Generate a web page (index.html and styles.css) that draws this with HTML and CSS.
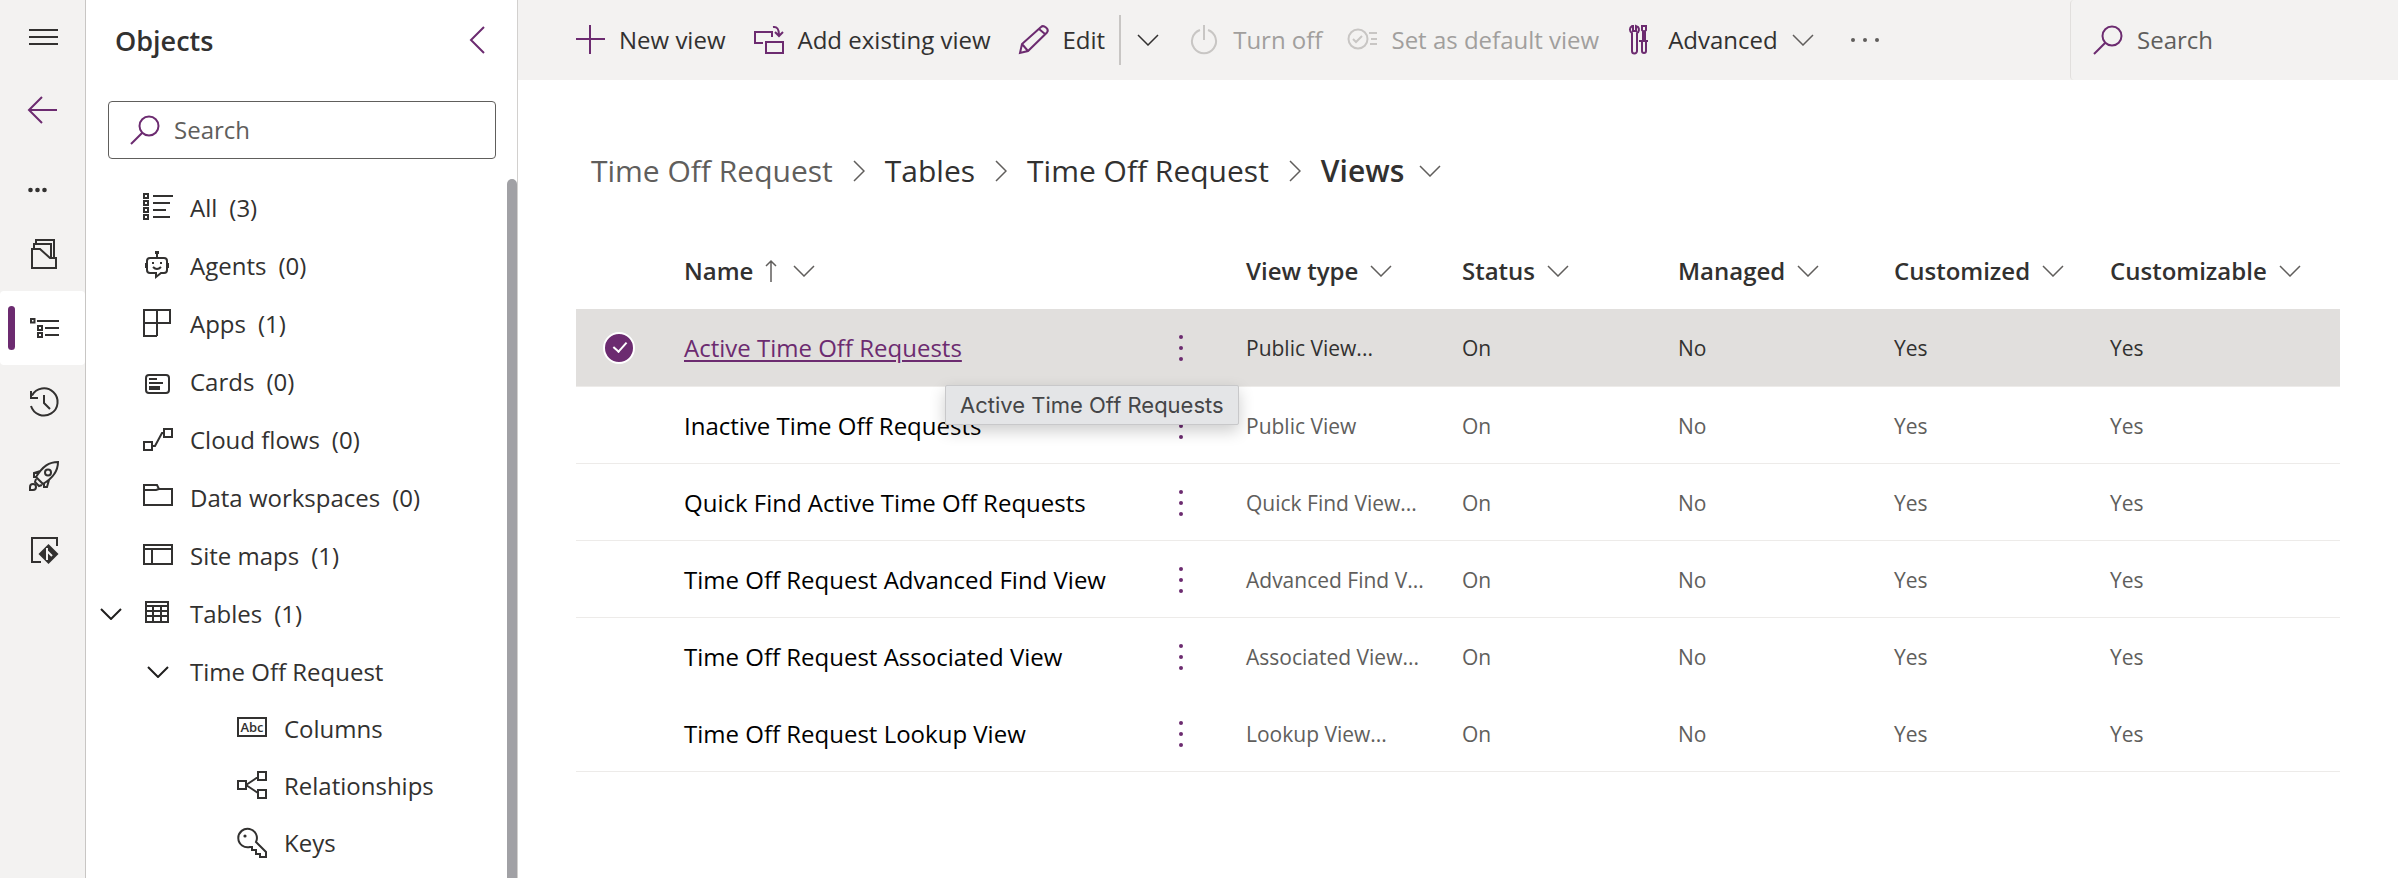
FILE: index.html
```
<!DOCTYPE html>
<html lang="en">
<head>
    <meta charset="UTF-8">
    <meta name="viewport" content="width=device-width, initial-scale=1.0">
    <title>Views - Time Off Request</title>
    <link rel="stylesheet" href="styles.css">
</head>
<body>
    <!-- shared shapes -->
    <svg class="sprite" aria-hidden="true">
        <symbol id="chevron" viewBox="0 0 22 12"><path d="M1 1l10 10 10-10"/></symbol>
        <symbol id="chevron-right" viewBox="0 0 12 22"><path d="M1 1l10 10-10 10"/></symbol>
        <symbol id="search" viewBox="0 0 30 30"><circle cx="19" cy="11" r="9.5"/><path d="M12.3 17.7L1 29"/></symbol>
        <symbol id="dots" viewBox="0 0 4 28"><circle cx="2" cy="3" r="2"/><circle cx="2" cy="14" r="2"/><circle cx="2" cy="25" r="2"/></symbol>
    </svg>

    <div class="app">
        <nav class="rail" aria-label="Main">
            <button class="rail-item" aria-label="Menu">
                <svg class="icon" viewBox="0 0 30 30"><path d="M1 8h29M1 15h29M1 22h29"/></svg>
            </button>
            <button class="rail-item purple" aria-label="Back">
                <svg class="icon" viewBox="0 0 30 30"><path d="M1 14h28M14 1L1 14l13 13"/></svg>
            </button>
            <button class="rail-item rail-more" aria-label="More">
                <svg class="icon solid" viewBox="0 0 30 30"><circle cx="2.5" cy="15" r="2.3"/><circle cx="9.5" cy="15" r="2.3"/><circle cx="16.5" cy="15" r="2.3"/></svg>
            </button>
            <button class="rail-item" aria-label="Overview">
                <svg class="icon" viewBox="0 0 30 30"><path d="M4 29V10h8l10 9h6v10zM6 10V5h17v14M8 5V1h18v18"/></svg>
            </button>
            <button class="rail-item selected" aria-label="Objects">
                <svg class="icon" viewBox="0 0 30 30"><path d="M3 6h3.500v3.500H3zM10 13h4v4h-4zM10 20h4v4h-4zM9 8h22M17 15h14M17 22h14"/></svg>
            </button>
            <button class="rail-item" aria-label="History">
                <svg class="icon" viewBox="0 0 30 30"><path d="M4 8.500A13.600 13.600 0 1 1 3 19M3 4v7h7M16 8v8l6 6"/></svg>
            </button>
            <button class="rail-item" aria-label="Publish">
                <svg class="icon" viewBox="0 0 30 30"><path d="M30 1c-9 0-15 4-22 15l7 7C25 17 30 10 30 1zM12.500 10L6 12v4h2M21 19l-2 7h-3v-3M8 18l-1 3 4 4 3-1"/><circle cx="20" cy="11.500" r="3"/><path d="M2 29v-3a3 3 0 1 1 3 3z"/></svg>
            </button>
            <button class="rail-item" aria-label="Source control">
                <svg class="icon" viewBox="0 0 30 30"><path d="M13 27H4V3h25v8"/><path class="solid" d="M20.500 9l10 10-10 10-10-10z"/><path class="light" d="M19 13v12M19 16l5 5"/></svg>
            </button>
        </nav>

        <aside class="objects">
            <header class="objects-header">
                <h2>Objects</h2>
                <button class="collapse" aria-label="Collapse">
                    <svg viewBox="0 0 16 28"><path d="M15 1L2 14l13 13"/></svg>
                </button>
            </header>
            <label class="search-box">
                <svg class="icon purple"><use href="#search"/></svg>
                <input type="search" placeholder="Search" aria-label="Search objects">
            </label>
            <div class="tree-area">
                <ul class="tree">
                    <li><a href="#"><svg class="icon" viewBox="0 0 30 30"><path d="M1 1h4v4H1zM1 8h4v4H1zM1 15h4v4H1zM1 22h4v4H1zM10 3h20M10 10h17M10 17h13M10 24h17"/></svg>All <span>(3)</span></a></li>
                    <li><a href="#"><svg class="icon" viewBox="0 0 30 30"><path d="M7 7h14a3 3 0 0 1 3 3v9a3 3 0 0 1-3 3h-3l-5 4v-4H7a3 3 0 0 1-3-3v-9a3 3 0 0 1 3-3zM14 7V1M3 12v5M25 12v5M10 16q4 4 8 0"/><path class="solid" d="M9 11h2v2H9zM17 11h2v2h-2zM12 0h4v3h-4z"/></svg>Agents <span>(0)</span></a></li>
                    <li><a href="#"><svg class="icon" viewBox="0 0 30 30"><path d="M1 1h26v13H1zM14 1v26M1 14v13h13"/></svg>Apps <span>(1)</span></a></li>
                    <li><a href="#"><svg class="icon" viewBox="0 0 30 30"><rect x="3" y="8" width="23" height="18" rx="3"/><path d="M6 12h8M6 16h14"/><path class="solid" d="M6 19h11v4H6z"/></svg>Cards <span>(0)</span></a></li>
                    <li><a href="#"><svg class="icon" viewBox="0 0 30 30"><path d="M1 17h8v8H1zM21 4h8v8h-8zM9 21h3l7-13h2"/></svg>Cloud flows <span>(0)</span></a></li>
                    <li><a href="#"><svg class="icon" viewBox="0 0 30 30"><path d="M1 2h13l2 4h13v16H1zM1 7h12l3-1"/></svg>Data workspaces <span>(0)</span></a></li>
                    <li><a href="#"><svg class="icon" viewBox="0 0 30 30"><path d="M1 4h28v19H1zM1 8h28M9 8v15"/></svg>Site maps <span>(1)</span></a></li>
                    <li>
                        <button class="toggle" aria-label="Collapse Tables"><svg class="chevron"><use href="#chevron"/></svg></button>
                        <a href="#"><svg class="icon" viewBox="0 0 30 30"><path d="M3 3h22v20H3zM3 7h22M3 12h22M3 17h22M10 7v16M18 7v16"/></svg>Tables <span>(1)</span></a>
                    </li>
                    <li class="level-2">
                        <button class="toggle" aria-label="Collapse Time Off Request"><svg class="chevron"><use href="#chevron"/></svg></button>
                        <a href="#">Time Off Request</a>
                    </li>
                    <li class="level-3"><a href="#"><svg class="icon" viewBox="0 0 30 30"><path d="M1 4h28v18H1z"/><text x="15" y="18" text-anchor="middle">Abc</text></svg>Columns</a></li>
                    <li class="level-3"><a href="#"><svg class="icon" viewBox="0 0 30 30"><path d="M1 10h8v8H1zM21 1h8v8h-8zM21 19h8v8h-8zM9 14l12-8M9 14l12 8"/></svg>Relationships</a></li>
                    <li class="level-3"><a href="#"><svg class="icon" viewBox="0 0 30 30"><path d="M19 14l10 10v5h-6v-3h-4v-4h-4v-3h-2A9.300 9.300 0 1 1 19 14z"/><circle class="solid" cx="8" cy="8" r="1.600"/></svg>Keys</a></li>
                </ul>
                <div class="scroll-thumb"></div>
            </div>
        </aside>

        <main class="content">
            <div class="command-bar">
                <button class="command"><svg class="icon" viewBox="0 0 30 30"><path d="M15 0v29M1 14h29"/></svg>New view</button>
                <button class="command"><svg class="icon" viewBox="0 0 30 30"><path d="M9 18H1V7h17v5M12 17h17v11H12zM19 2q6-1 6 8M21 7l4 4 4-4"/></svg>Add existing view</button>
                <button class="command"><svg class="icon" viewBox="0 0 30 30"><path d="M1 28l2-9L22 2q2-2 5 .5t1 5L9 26zM20 4l6 5M3 19l6 7"/></svg>Edit</button>
                <button class="command split" aria-label="More edit options"><svg class="chevron"><use href="#chevron"/></svg></button>
                <button class="command" disabled><svg class="icon" viewBox="0 0 30 30"><path d="M15 0v15M11 5a12 12 0 1 0 8 0"/></svg>Turn off</button>
                <button class="command" disabled><svg class="icon" viewBox="0 0 30 30"><circle cx="11" cy="14" r="9.500"/><path d="M6 14l3 3 6-6M22 8h8M24 14h6M23 19h7"/></svg>Set as default view</button>
                <button class="command"><svg class="icon" viewBox="0 0 30 30"><path d="M8 8v18a2 2 0 0 0 5 0V8a4 4 0 0 0 1-6l-2-1v5H9V1L8 1a4 4 0 0 0 0 7zM18 1h4v4l-1 1v10h-2V6l-1-1zM15 16h9M18 16v10a2 2 0 0 0 4 0V16"/></svg>Advanced<svg class="chevron"><use href="#chevron"/></svg></button>
                <button class="command overflow" aria-label="More commands"><svg viewBox="0 0 28 4"><circle cx="2" cy="2" r="2"/><circle cx="14" cy="2" r="2"/><circle cx="26" cy="2" r="2"/></svg></button>
                <label class="command-search">
                    <svg class="icon purple"><use href="#search"/></svg>
                    <input type="search" placeholder="Search" aria-label="Search views">
                </label>
            </div>

            <nav class="breadcrumb" aria-label="Breadcrumb">
                <a class="muted" href="#">Time Off Request</a>
                <svg class="separator"><use href="#chevron-right"/></svg>
                <a href="#">Tables</a>
                <svg class="separator"><use href="#chevron-right"/></svg>
                <a href="#">Time Off Request</a>
                <svg class="separator"><use href="#chevron-right"/></svg>
                <button class="current">Views<svg class="chevron"><use href="#chevron"/></svg></button>
            </nav>

            <table class="views">
                <thead>
                    <tr>
                        <th class="check-col"></th>
                        <th><button>Name<svg class="sort" viewBox="0 0 12 22"><path d="M6 22V1M1 6l5-5 5 5"/></svg><svg class="chevron"><use href="#chevron"/></svg></button></th>
                        <th class="info-col"><button>View type<svg class="chevron"><use href="#chevron"/></svg></button></th>
                        <th class="info-col"><button>Status<svg class="chevron"><use href="#chevron"/></svg></button></th>
                        <th class="info-col"><button>Managed<svg class="chevron"><use href="#chevron"/></svg></button></th>
                        <th class="info-col"><button>Customized<svg class="chevron"><use href="#chevron"/></svg></button></th>
                        <th class="last-col"><button>Customizable<svg class="chevron"><use href="#chevron"/></svg></button></th>
                    </tr>
                </thead>
                <tbody>
                    <tr class="selected">
                        <td><input type="checkbox" class="row-check" aria-label="Select Active Time Off Requests" checked></td>
                        <td>
                            <div class="name-cell">
                                <a href="#">Active Time Off Requests</a>
                                <button class="row-menu" aria-label="More actions"><svg><use href="#dots"/></svg></button>
                                <div class="tooltip" role="tooltip">Active Time Off Requests</div>
                            </div>
                        </td>
                        <td>Public View...</td>
                        <td>On</td>
                        <td>No</td>
                        <td>Yes</td>
                        <td>Yes</td>
                    </tr>
                    <tr>
                        <td></td>
                        <td><div class="name-cell"><a href="#">Inactive Time Off Requests</a><button class="row-menu" aria-label="More actions"><svg><use href="#dots"/></svg></button></div></td>
                        <td>Public View</td>
                        <td>On</td>
                        <td>No</td>
                        <td>Yes</td>
                        <td>Yes</td>
                    </tr>
                    <tr>
                        <td></td>
                        <td><div class="name-cell"><a href="#">Quick Find Active Time Off Requests</a><button class="row-menu" aria-label="More actions"><svg><use href="#dots"/></svg></button></div></td>
                        <td>Quick Find View...</td>
                        <td>On</td>
                        <td>No</td>
                        <td>Yes</td>
                        <td>Yes</td>
                    </tr>
                    <tr>
                        <td></td>
                        <td><div class="name-cell"><a href="#">Time Off Request Advanced Find View</a><button class="row-menu" aria-label="More actions"><svg><use href="#dots"/></svg></button></div></td>
                        <td>Advanced Find V...</td>
                        <td>On</td>
                        <td>No</td>
                        <td>Yes</td>
                        <td>Yes</td>
                    </tr>
                    <tr class="no-line">
                        <td></td>
                        <td><div class="name-cell"><a href="#">Time Off Request Associated View</a><button class="row-menu" aria-label="More actions"><svg><use href="#dots"/></svg></button></div></td>
                        <td>Associated View...</td>
                        <td>On</td>
                        <td>No</td>
                        <td>Yes</td>
                        <td>Yes</td>
                    </tr>
                    <tr>
                        <td></td>
                        <td><div class="name-cell"><a href="#">Time Off Request Lookup View</a><button class="row-menu" aria-label="More actions"><svg><use href="#dots"/></svg></button></div></td>
                        <td>Lookup View...</td>
                        <td>On</td>
                        <td>No</td>
                        <td>Yes</td>
                        <td>Yes</td>
                    </tr>
                </tbody>
            </table>
        </main>
    </div>
</body>
</html>
```
FILE: styles.css
```
* {
    box-sizing: border-box;
}
body {
    margin: 0;
    font-family: "Segoe UI", "Open Sans", "Noto Sans", sans-serif;
    font-size: 24px;
    line-height: 32px;
    color: #323130;
    background: #fff;
}
button {
    font: inherit;
    color: inherit;
    background: none;
    border: 0;
    padding: 0;
    cursor: pointer;
}
a {
    color: inherit;
    text-decoration: none;
}
input[type="search"] {
    flex: 1;
    min-width: 0;
    padding: 0;
    border: 0;
    outline: 0;
    background: none;
    font: inherit;
    color: inherit;
}
input::placeholder {
    color: #605e5c;
    opacity: 1;
}
svg {
    display: block;
    flex: none;
    fill: none;
    stroke: currentColor;
    stroke-width: 2;
    overflow: visible;
}
.sprite {
    position: absolute;
    width: 0;
    height: 0;
}
.icon {
    width: 30px;
    height: 30px;
}
.icon text {
    font-size: 13px;
    font-weight: 600;
    fill: currentColor;
    stroke: none;
}
.chevron {
    width: 22px;
    height: 12px;
    stroke-width: 1.5;
}
.solid {
    fill: currentColor;
    stroke: none;
}
.light {
    stroke: #f3f2f1;
}
.purple {
    color: #6c2b70;
}
.app {
    display: flex;
    min-height: 100vh;
}

/* left rail */
.rail {
    flex: none;
    width: 86px;
    background: #f3f2f1;
    border-right: 1px solid #c8c6c4;
}
.rail-item {
    display: flex;
    align-items: center;
    width: 100%;
    height: 74px;
    padding-left: 28px;
}
.rail-more {
    height: 69px;
    padding-top: 15px;
}
.rail-item.selected {
    gap: 13px;
    padding-left: 8px;
    background: #fff;
    border-radius: 4px;
}
.rail-item.selected::before {
    content: "";
    width: 7px;
    height: 44px;
    border-radius: 4px;
    background: #6c2b70;
}

/* objects pane */
.objects {
    flex: none;
    display: flex;
    flex-direction: column;
    width: 432px;
    height: 100vh;
    overflow: hidden;
    border-right: 1px solid #d2d0ce;
}
.objects-header {
    display: flex;
    justify-content: space-between;
    align-items: center;
    height: 80px;
    padding: 0 32px 0 29px;
}
.objects-header h2 {
    margin: 0;
    padding-top: 2px;
    font-size: 27px;
    font-weight: 600;
}
.collapse svg {
    width: 16px;
    height: 28px;
    color: #6c2b70;
}
.search-box {
    display: flex;
    align-items: center;
    gap: 14px;
    height: 58px;
    margin: 21px 21px 20px 22px;
    padding: 0 21px;
    border: 1px solid #605e5c;
    border-radius: 4px;
}
.tree-area {
    display: flex;
    flex: 1;
    min-height: 0;
}
.tree {
    flex: 1;
    margin: 0;
    padding: 0;
    list-style: none;
}
.tree li {
    display: flex;
    align-items: center;
    height: 58px;
    padding-left: 57px;
}
.tree a {
    display: flex;
    align-items: center;
    gap: 17px;
}
.tree a span {
    margin-left: -5px;
}
.tree .toggle {
    margin-left: -43px;
    margin-right: 21px;
    color: #201f1e;
}
.tree .toggle .chevron {
    stroke-width: 2;
}
.tree .level-2,
.tree .level-3 {
    height: 57px;
}
.tree .level-2 {
    padding-left: 104px;
}
.tree .level-3 {
    padding-left: 151px;
}
.scroll-thumb {
    width: 10px;
    border-radius: 5px 5px 0 0;
    background: #a1a1a5;
}

/* main area */
.content {
    flex: 1;
    min-width: 0;
}
.command-bar {
    display: flex;
    height: 80px;
    padding-left: 57px;
    background: #f3f2f1;
}
.command {
    display: flex;
    align-items: center;
    gap: 14px;
    margin-right: 28px;
    white-space: nowrap;
}
.command svg {
    color: #6c2b70;
}
.command .chevron {
    color: #605e5c;
}
.command:disabled {
    margin-right: 25px;
    color: #a19f9d;
}
.command:disabled svg {
    color: #c8c6c4;
}
.command.split {
    align-self: center;
    height: 50px;
    margin-left: -14px;
    margin-right: 30px;
    padding-left: 16px;
    border-left: 2px solid #c8c6c4;
}
.command.split .chevron {
    color: #323130;
}
.command.overflow {
    margin-left: 9px;
}
.command.overflow svg {
    width: 28px;
    height: 4px;
    fill: #605e5c;
    stroke: none;
}
.command-search {
    display: flex;
    align-items: center;
    gap: 14px;
    width: 328px;
    margin-left: auto;
    padding: 0 22px;
    border-left: 1px solid #e1dfdd;
    border-radius: 4px;
}
.breadcrumb {
    display: flex;
    align-items: center;
    gap: 20px;
    padding: 69px 58px 0 73px;
    font-size: 30px;
    line-height: 44px;
}
.breadcrumb .muted {
    color: #605e5c;
}
.breadcrumb .separator {
    width: 12px;
    height: 22px;
    color: #605e5c;
    stroke-width: 1.5;
}
.breadcrumb .current {
    display: flex;
    align-items: center;
    gap: 15px;
    font-weight: 600;
}
.breadcrumb .current .chevron {
    color: #605e5c;
}

/* views table */
.views {
    width: calc(100% - 116px);
    margin: 39px 58px 0;
    border-collapse: collapse;
    table-layout: fixed;
}
.views th,
.views td {
    height: 77px;
    padding: 0 0 0 11px;
    text-align: left;
    white-space: nowrap;
}
.views th button {
    display: flex;
    align-items: center;
    gap: 12px;
    font-weight: 600;
}
.views th svg {
    color: #605e5c;
}
.views .sort {
    width: 12px;
    height: 22px;
    margin-right: 4px;
    stroke-width: 1.5;
}
.check-col {
    width: 97px;
}
.info-col {
    width: 216px;
}
.last-col {
    width: 241px;
}
.views td {
    padding-top: 2px;
    border-bottom: 1px solid #edebe9;
    font-size: 21px;
    color: #605e5c;
}
.views .selected td {
    background: #e1dfdd;
    color: #323130;
}
.views .no-line td {
    border-bottom-color: transparent;
}
.name-cell {
    position: relative;
    display: flex;
    justify-content: space-between;
    align-items: center;
    padding-right: 34px;
    font-size: 24px;
    color: #000;
}
.selected .name-cell a {
    color: #6c2b70;
    text-decoration: underline;
    text-decoration-thickness: 2px;
    text-underline-offset: 3px;
}
.row-menu {
    display: flex;
    justify-content: center;
    width: 40px;
    color: #6c2b70;
}
.row-menu svg {
    width: 4px;
    height: 28px;
    fill: currentColor;
    stroke: none;
}
.row-check {
    appearance: none;
    display: block;
    width: 32px;
    height: 32px;
    margin: 0 0 0 16px;
    border: 2px solid #fff;
    border-radius: 50%;
    background: #6c2b70;
}
.row-check::after {
    content: "";
    display: block;
    width: 6px;
    height: 11px;
    margin: 5px 0 0 11px;
    border: solid #fff;
    border-width: 0 2px 2px 0;
    transform: rotate(42deg);
}
.tooltip {
    position: absolute;
    top: 53px;
    left: 261px;
    z-index: 1;
    padding: 3px 14px;
    border: 1px solid #c8c8ca;
    border-radius: 2px;
    background: #e4e5e7;
    box-shadow: 0 6px 16px rgba(0, 0, 0, 0.2);
    font-family: Inter, sans-serif;
    font-size: 22px;
    color: #454547;
}
```
